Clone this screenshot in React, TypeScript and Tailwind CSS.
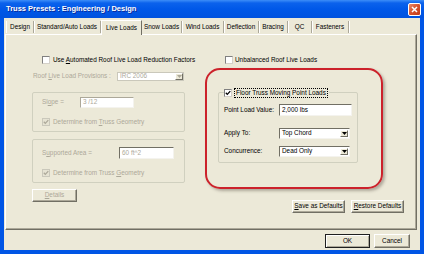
import React from "react";

function CheckBox({ checked, disabled }: { checked?: boolean; disabled?: boolean }) {
  return (
    <span
      className={
        disabled
          ? "inline-flex w-[8px] h-[8px] shrink-0 items-center justify-center border border-[#cac8bb] bg-[#e6e3d3]"
          : "inline-flex w-[8px] h-[8px] shrink-0 items-center justify-center border border-t-[#808080] border-l-[#808080] border-b-[#d4d0c8] border-r-[#d4d0c8] bg-white"
      }
    >
      {checked && (
        <svg width="6" height="6" viewBox="0 0 6 6">
          <path d="M0.8 2.8 L2.3 4.4 L5.3 1.1" stroke={disabled ? "#aca899" : "#000"} strokeWidth="1.3" fill="none" />
        </svg>
      )}
    </span>
  );
}

function Arrow({ disabled }: { disabled?: boolean }) {
  return (
    <span className="flex w-[8px] h-full shrink-0 items-center justify-center bg-[#ece9d8] border border-t-white border-l-white border-b-[#716f64] border-r-[#716f64]">
      <svg width="5" height="3" viewBox="0 0 5 3">
        <path d="M0 0 H5 L2.5 3 Z" fill={disabled ? "#aca899" : "#000"} />
      </svg>
    </span>
  );
}

function Btn({ children, cls, disabled, isDefault }: { children: React.ReactNode; cls: string; disabled?: boolean; isDefault?: boolean }) {
  return (
    <div
      className={`${cls} flex items-center justify-center bg-[#ece9d8] ${
        isDefault
          ? "border border-[#1f1f1f] shadow-[inset_1px_1px_0_#fff,inset_-1px_-1px_0_#aca899]"
          : "border border-t-white border-l-white border-b-[#716f64] border-r-[#716f64] shadow-[inset_-1px_-1px_0_#aca899]"
      } ${disabled ? "text-[#aca899]" : "text-black"}`}
    >
      {children}
    </div>
  );
}

const tabs: { label: string; cls: string; sel?: boolean }[] = [
  { label: "Design", cls: "w-[28px] border-l border-l-white" },
  { label: "Standard/Auto Loads", cls: "w-[67px]" },
  { label: "Live Loads", cls: "w-[41px]", sel: true },
  { label: "Snow Loads", cls: "w-[40px]" },
  { label: "Wind Loads", cls: "w-[42px]" },
  { label: "Deflection", cls: "w-[35px]" },
  { label: "Bracing", cls: "w-[29px]" },
  { label: "QC", cls: "w-[24px]" },
  { label: "Fasteners", cls: "w-[37px]" },
];

export default function App() {
  return (
    <div className="w-[424px] h-[254px] overflow-hidden flex flex-col bg-[#0055e5] font-['Liberation_Sans',Arial,sans-serif] text-[6.4px] leading-none text-black">
      {/* Title bar */}
      <div className="h-[18px] shrink-0 flex items-center justify-between pl-[6px] pr-[3px] bg-[linear-gradient(to_bottom,#3d8ef8_0px,#0b62ec_3px,#0058e8_9px,#0052df_18px)]">
        <span className="text-white font-bold text-[7.5px] [text-shadow:1px_1px_0_#0a2a9a]">
          Truss Presets : Engineering / Design
        </span>
        <div className="w-[13px] h-[13px] rounded-[2px] border border-white bg-[linear-gradient(135deg,#eb8a6a,#d5512c_50%,#c23a18)] flex items-center justify-center">
          <svg width="7" height="7" viewBox="0 0 7 7">
            <path d="M1 1 L6 6 M6 1 L1 6" stroke="#fff" strokeWidth="1.5" />
          </svg>
        </div>
      </div>

      {/* Body */}
      <div className="flex-1 mx-[4px] mb-[4px] bg-[#ece9d8] flex flex-col">
        {/* Tabs */}
        <div className="h-[16px] pt-[2px] pl-[2px] flex items-end">
          {tabs.map((t) =>
            t.sel ? (
              <div
                key={t.label}
                className={`${t.cls} relative z-10 -mb-[1px] h-[15px] flex items-start pt-[4px] justify-center bg-[#ece9d8] border-t border-l border-r border-t-white border-l-white border-r-[#716f64]`}
              >
                {t.label}
              </div>
            ) : (
              <div
                key={t.label}
                className={`${t.cls} h-[12px] flex items-center justify-center border-r border-r-[#aca899] shadow-[1px_0_0_#fff] mb-[1px]`}
              >
                {t.label}
              </div>
            )
          )}
        </div>

        {/* Panel */}
        <div className="ml-[1px] w-[412px] h-[196px] border border-t-white border-l-white border-r-[#716f64] border-b-[#716f64] shadow-[inset_0_-1px_0_#aca899,inset_-1px_0_0_#aca899] flex flex-col">
          {/* checkbox row */}
          <div className="mt-[21px] pl-[36px] flex h-[8px] items-center">
            <div className="w-[183px] flex items-center gap-[3px]">
              <CheckBox />
              <span>
                Use <span className="underline">A</span>utomated Roof Live Load Reduction Factors
              </span>
            </div>
            <div className="flex items-center gap-[2px]">
              <CheckBox />
              <span>Unbalanced Roof Live Loads</span>
            </div>
          </div>

          {/* columns */}
          <div className="mt-[4px] pl-[26px] flex items-start gap-[20px]">
            {/* left col */}
            <div className="w-[153px] mt-[4px] flex flex-col text-[#aca899]">
              <div className="h-[9px] flex items-center">
                <span className="w-[85px] pl-[1px]">
                  Roof <span className="underline">L</span>ive Load Provisions :
                </span>
                <div className="w-[67px] h-[9px] flex items-center justify-between bg-white border border-[#cac8bb] pl-[2px]">
                  <span>IRC 2006</span>
                  <Arrow disabled />
                </div>
              </div>

              <div className="mt-[11px] h-[40px] border border-[#d0d0bf] rounded-[2px] flex flex-col pt-[4px]">
                <div className="pl-[9px] flex items-center h-[11px]">
                  <span className="w-[38px]">
                    Sl<span className="underline">o</span>pe =
                  </span>
                  <div className="w-[54px] h-[11px] bg-white border border-t-[#aca899] border-l-[#aca899] border-b-[#f4f3ee] border-r-[#f4f3ee] flex items-center pl-[2px]">
                    3 /12
                  </div>
                </div>
                <div className="pl-[9px] mt-[10px] flex items-center gap-[3px]">
                  <CheckBox checked disabled />
                  <span>
                    Determine from <span className="underline">T</span>russ Geometry
                  </span>
                </div>
              </div>

              <div className="mt-[7px] h-[44px] border border-[#d0d0bf] rounded-[2px] flex flex-col pt-[7px]">
                <div className="pl-[9px] flex items-center h-[12px]">
                  <span className="w-[77px]">
                    S<span className="underline">u</span>pported Area =
                  </span>
                  <div className="w-[55px] h-[12px] bg-white border border-t-[#716f64] border-l-[#716f64] border-b-[#f4f3ee] border-r-[#f4f3ee] flex items-center pl-[2px]">
                    60 ft^2
                  </div>
                </div>
                <div className="pl-[9px] mt-[10px] flex items-center gap-[3px]">
                  <CheckBox checked disabled />
                  <span>
                    Determine from Truss <span className="underline">G</span>eometry
                  </span>
                </div>
              </div>

              <Btn cls="mt-[6px] w-[45px] h-[13px]" disabled>
                <span>
                  <span className="underline">D</span>etails
                </span>
              </Btn>
            </div>

            {/* right col */}
            <div className="w-[199px] flex flex-col">
              <div className="w-[178px] h-[121px] rounded-[15px] border-2 border-[#cc222b] shadow-[2px_2px_3px_rgba(60,50,40,0.35)] pt-[22px] pl-[11px]">
                <div className="relative w-[140px] h-[71px] border border-[#d0d0bf] rounded-[2px] flex flex-col pt-[11px]">
                  <div className="absolute -top-[5px] left-[5px] bg-[#ece9d8] flex items-center gap-[2px] pr-[1px]">
                    <CheckBox checked />
                    <span className="border border-dotted border-black px-[1px] py-[1px]">Floor Truss Moving Point Loads</span>
                  </div>
                  <div className="pl-[5px] flex items-center h-[12px]">
                    <span className="w-[55px]">Point Load Value:</span>
                    <div className="w-[73px] h-[12px] bg-white border border-t-[#716f64] border-l-[#716f64] border-b-[#f4f3ee] border-r-[#f4f3ee] flex items-center pl-[2px]">
                      2,000 lbs
                    </div>
                  </div>
                  <div className="pl-[5px] mt-[12px] flex items-center h-[11px]">
                    <span className="w-[55px]">Apply To:</span>
                    <div className="w-[71px] h-[11px] bg-white border border-t-[#716f64] border-l-[#716f64] border-b-[#f4f3ee] border-r-[#f4f3ee] flex items-center justify-between pl-[2px] pr-[1px] py-[1px]">
                      <span>Top Chord</span>
                      <Arrow />
                    </div>
                  </div>
                  <div className="pl-[5px] mt-[7px] flex items-center h-[11px]">
                    <span className="w-[55px]">Concurrence:</span>
                    <div className="w-[71px] h-[11px] bg-white border border-t-[#716f64] border-l-[#716f64] border-b-[#f4f3ee] border-r-[#f4f3ee] flex items-center justify-between pl-[2px] pr-[1px] py-[1px]">
                      <span>Dead Only</span>
                      <Arrow />
                    </div>
                  </div>
                </div>
              </div>
              <div className="mt-[11px] flex justify-end gap-[6px]">
                <Btn cls="w-[53px] h-[13px]">
                  <span>
                    <span className="underline">S</span>ave as Defaults
                  </span>
                </Btn>
                <Btn cls="w-[53px] h-[13px]">
                  <span>
                    <span className="underline">R</span>estore Defaults
                  </span>
                </Btn>
              </div>
            </div>
          </div>
        </div>

        {/* Bottom buttons */}
        <div className="mt-[4px] flex justify-end gap-[4px] pr-[10px]">
          <Btn cls="w-[45px] h-[14px]" isDefault>
            OK
          </Btn>
          <Btn cls="w-[36px] h-[14px]">Cancel</Btn>
        </div>
      </div>
    </div>
  );
}
